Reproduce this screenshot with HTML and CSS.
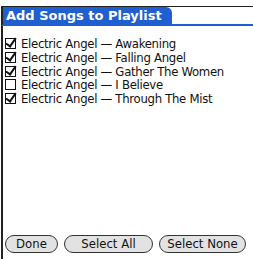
FILE: index.html
```html
<!DOCTYPE html>
<html>
<head>
<meta charset="utf-8">
<link rel="stylesheet" href="styles.css">
</head>
<body>
<div class="form">
  <div class="titlebar">
    <div class="tab">Add Songs to Playlist</div>
  </div>
  <ul class="list">
    <li class="item"><span class="box checked"></span>Electric Angel — Awakening</li>
    <li class="item"><span class="box checked"></span>Electric Angel — Falling Angel</li>
    <li class="item"><span class="box checked"></span>Electric Angel — Gather The Women</li>
    <li class="item"><span class="box"></span>Electric Angel — I Believe</li>
    <li class="item"><span class="box checked"></span>Electric Angel — Through The Mist</li>
  </ul>
  <div class="buttons">
    <button class="btn btn-done">Done</button>
    <button class="btn btn-all">Select All</button>
    <button class="btn btn-none">Select None</button>
  </div>
</div>
</body>
</html>
```
FILE: styles.css
```css
html, body {
  margin: 0;
  padding: 0;
  background: #fff;
  overflow: hidden;
}
.form {
  width: 253px;
  height: 259px;
  box-sizing: border-box;
  padding-top: 6px;
  display: flex;
  flex-direction: column;
  font-family: "DejaVu Sans", "Liberation Sans", sans-serif;
  font-stretch: condensed;
}
.titlebar {
  border-top: 1px solid #222;
  border-left: 2px solid #222;
  margin-left: 1px;
  border-bottom: 2px solid #1f5fcf;
  display: flex;
}
.tab {
  background: #1f5fcf;
  color: #fff;
  font-weight: bold;
  font-size: 13px;
  font-stretch: normal;
  line-height: 17px;
  padding: 0 10px 0 3px;
  border-top-right-radius: 6px;
}
.list {
  list-style: none;
  margin: 0;
  padding: 11px 0 0 0;
  flex: 1;
  border-left: 2px solid #222;
  margin-left: 1px;
}
.item {
  display: flex;
  align-items: center;
  height: 13.7px;
  font-size: 13px;
  letter-spacing: -0.3px;
  color: #111;
  white-space: nowrap;
  padding-left: 2px;
}
.box {
  width: 9px;
  height: 9px;
  border: 1px solid #111;
  margin-right: 5px;
  position: relative;
  flex: none;
}
.box.checked::after {
  content: "";
  position: absolute;
  left: 2px;
  top: -3px;
  width: 4px;
  height: 9px;
  border-right: 2px solid #111;
  border-bottom: 2px solid #111;
  transform: rotate(35deg);
}
.buttons {
  display: flex;
  gap: 6px;
  padding: 0 0 6px 2px;
  border-left: 2px solid #222;
  margin-left: 1px;
}
.btn {
  font-family: "DejaVu Sans", "Liberation Sans", sans-serif;
  font-stretch: condensed;
  font-size: 13px;
  height: 18px;
  padding: 0;
  background: #e2e2e2;
  border: 1px solid #333;
  border-radius: 9px;
  color: #111;
  line-height: 16px;
}
.btn-done { width: 53px; }
.btn-all { width: 89px; }
.btn-none { width: 87px; }
```
